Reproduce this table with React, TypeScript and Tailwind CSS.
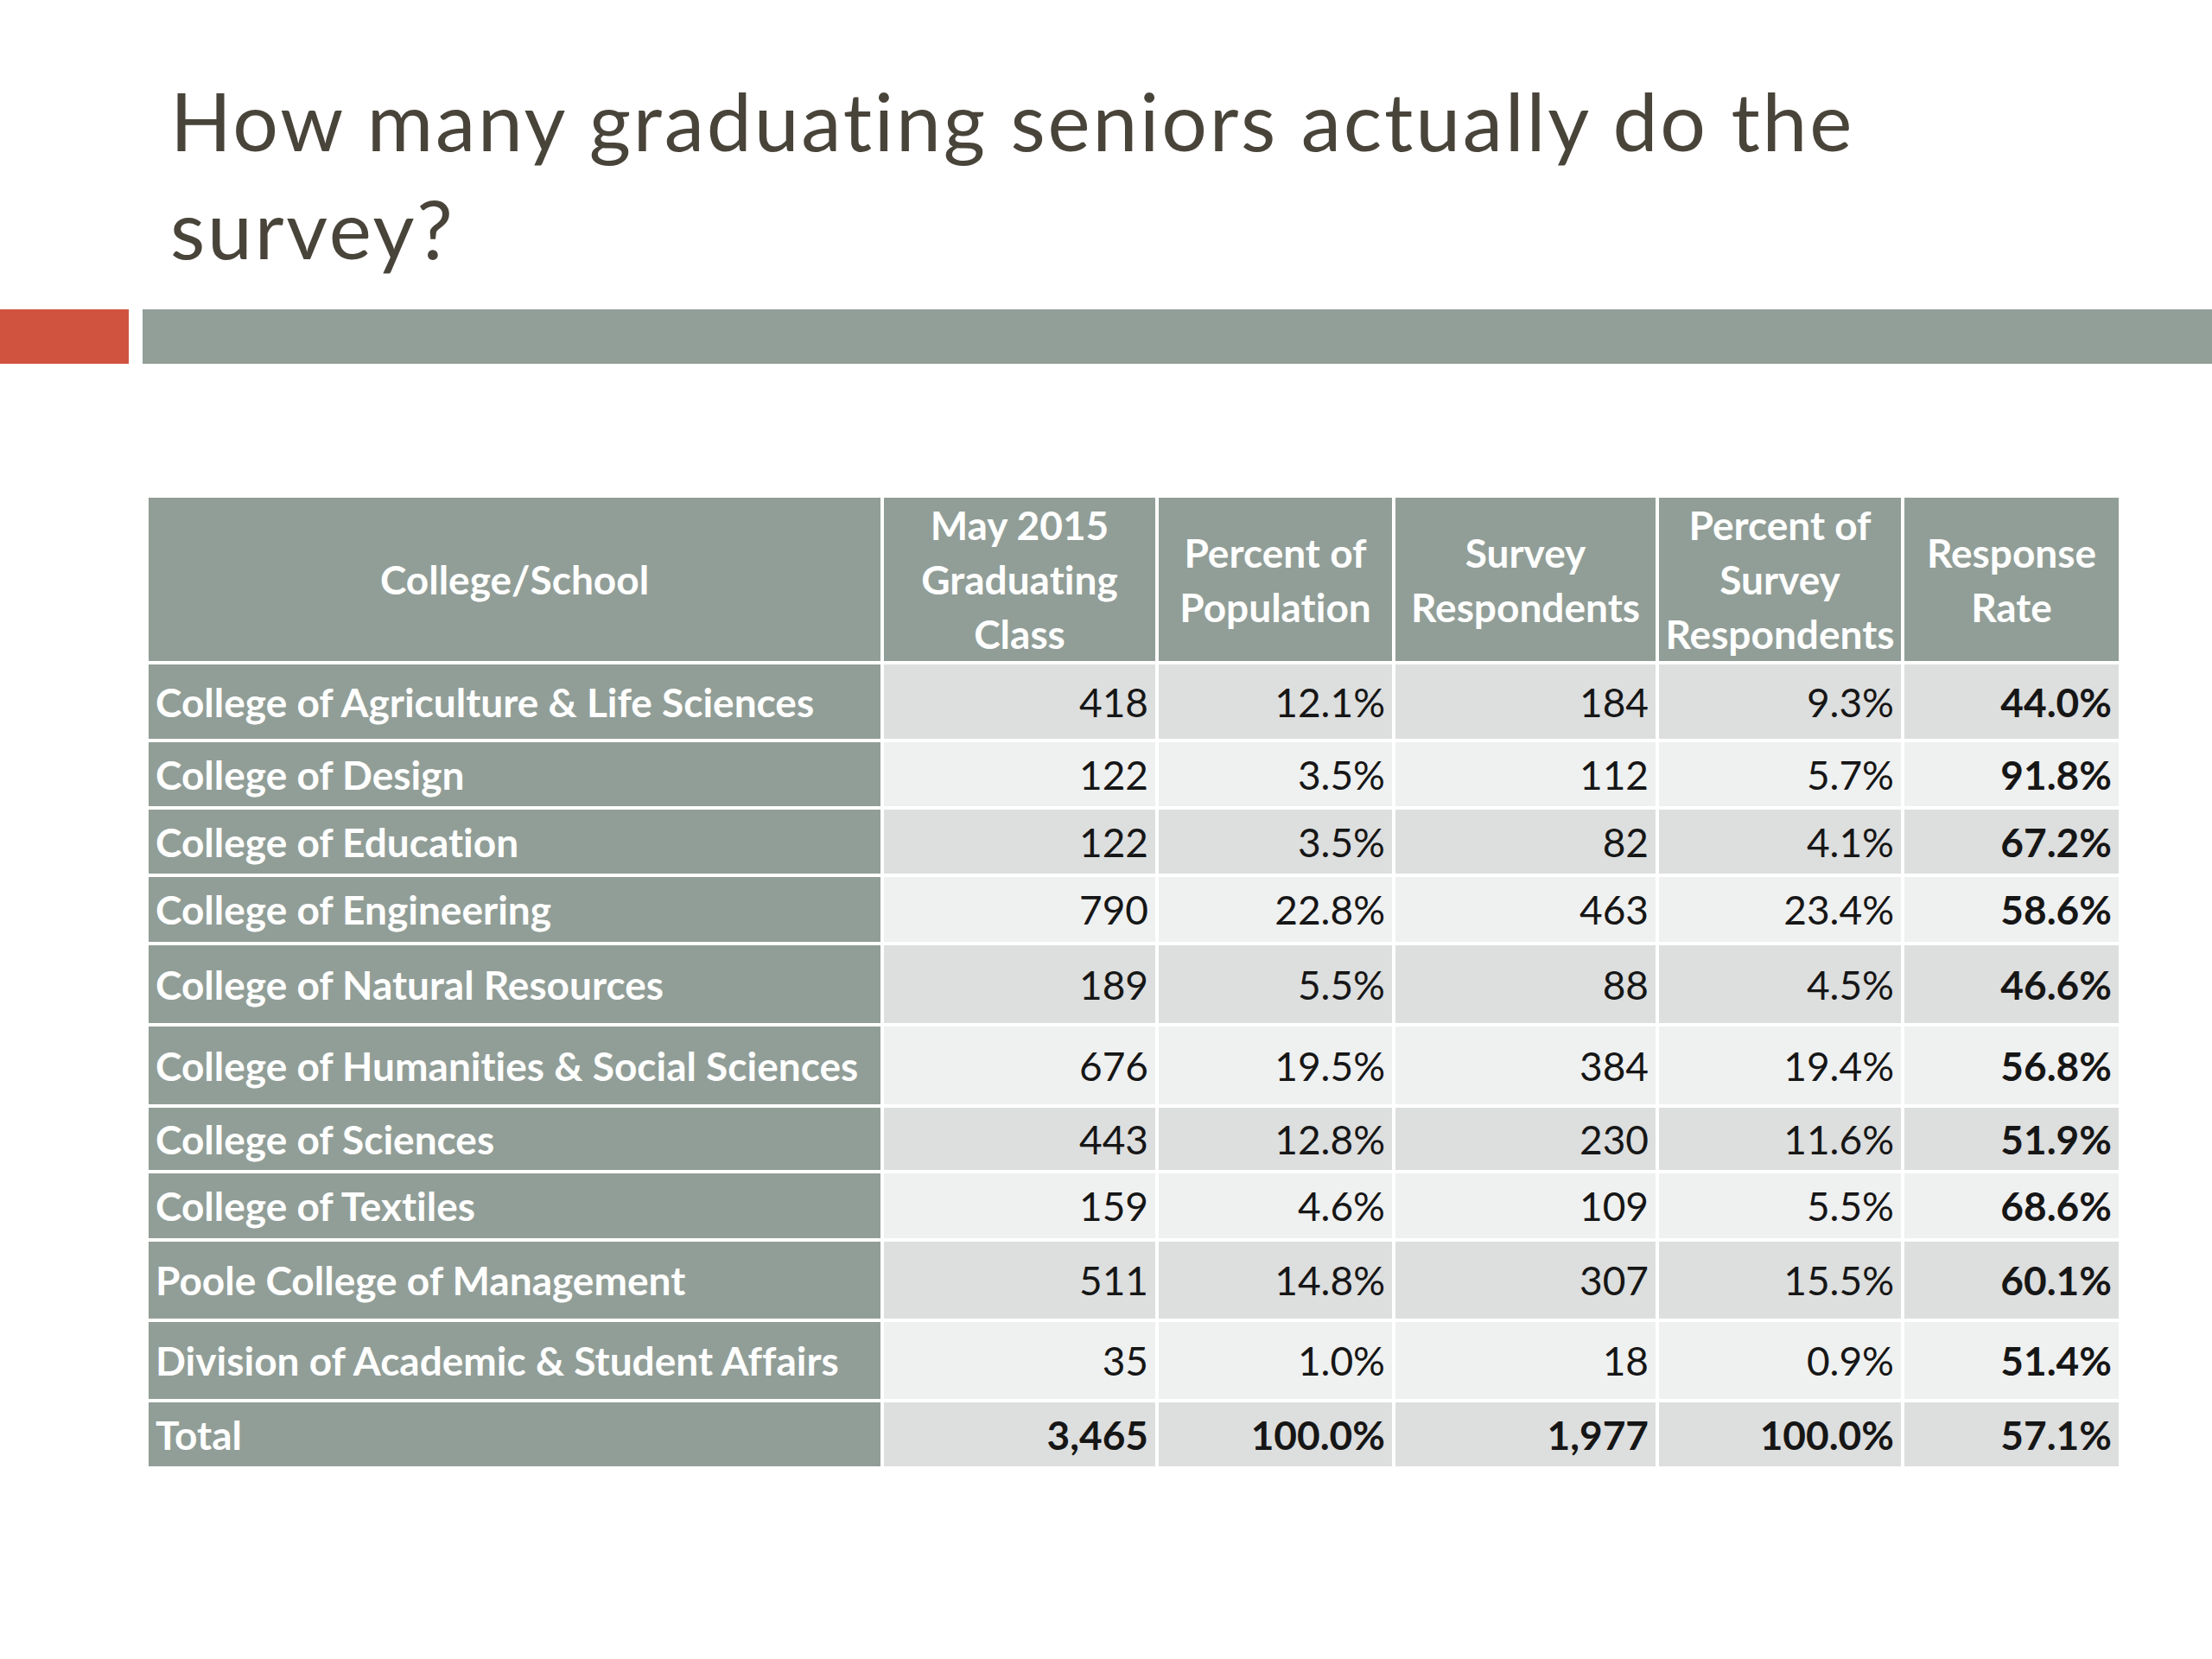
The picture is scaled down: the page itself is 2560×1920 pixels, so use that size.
const rows = [
  { name: "College of Agriculture & Life Sciences", cls: "418", pop: "12.1%", resp: "184", pct: "9.3%", rate: "44.0%", h: "h-[86px]", bg: "bg-[#dddede]" },
  { name: "College of Design", cls: "122", pop: "3.5%", resp: "112", pct: "5.7%", rate: "91.8%", h: "h-[74px]", bg: "bg-[#eff0f0]" },
  { name: "College of Education", cls: "122", pop: "3.5%", resp: "82", pct: "4.1%", rate: "67.2%", h: "h-[74px]", bg: "bg-[#dddede]" },
  { name: "College of Engineering", cls: "790", pop: "22.8%", resp: "463", pct: "23.4%", rate: "58.6%", h: "h-[75px]", bg: "bg-[#eff0f0]" },
  { name: "College of Natural Resources", cls: "189", pop: "5.5%", resp: "88", pct: "4.5%", rate: "46.6%", h: "h-[90px]", bg: "bg-[#dddede]" },
  { name: "College of Humanities & Social Sciences", cls: "676", pop: "19.5%", resp: "384", pct: "19.4%", rate: "56.8%", h: "h-[90px]", bg: "bg-[#eff0f0]" },
  { name: "College of Sciences", cls: "443", pop: "12.8%", resp: "230", pct: "11.6%", rate: "51.9%", h: "h-[72px]", bg: "bg-[#dddede]" },
  { name: "College of Textiles", cls: "159", pop: "4.6%", resp: "109", pct: "5.5%", rate: "68.6%", h: "h-[75px]", bg: "bg-[#eff0f0]" },
  { name: "Poole College of Management", cls: "511", pop: "14.8%", resp: "307", pct: "15.5%", rate: "60.1%", h: "h-[89px]", bg: "bg-[#dddede]" },
  { name: "Division of Academic & Student Affairs", cls: "35", pop: "1.0%", resp: "18", pct: "0.9%", rate: "51.4%", h: "h-[89px]", bg: "bg-[#eff0f0]" },
];

const total = { name: "Total", cls: "3,465", pop: "100.0%", resp: "1,977", pct: "100.0%", rate: "57.1%" };

const grid = "grid grid-cols-[847px_314px_270px_301px_280px_248px] gap-x-[4px]";

function DataCell({ value, bg, bold }: { value: string; bg: string; bold?: boolean }) {
  return (
    <div className={`${bg} flex items-center justify-end pr-[8px] ${bold ? "font-bold" : ""}`}>
      {value}
    </div>
  );
}

export default function App() {
  return (
    <div
      className="w-[2560px] h-[1920px] bg-white overflow-hidden [font-variant-ligatures:none]"
      style={{ fontFamily: "Lato, 'Open Sans', sans-serif" }}
    >
      {/* title */}
      <h1 className="pt-[77px] pl-[197px] text-[93px] leading-[125px] tracking-[2.8px] text-[#49443a] font-normal">
        How many graduating seniors actually do the
        <br />
        survey?
      </h1>

      {/* accent bar */}
      <div className="mt-[31px] flex gap-[16px] h-[63px]">
        <div className="w-[149px] bg-[#cf533f]" />
        <div className="flex-1 bg-[#929f98]" />
      </div>

      {/* table */}
      <div className="mt-[155px] ml-[172px] w-[2280px] text-[46px] text-[#161616]">
        <div className={`${grid} h-[182px] text-white font-bold leading-[63px] text-center`}>
          <div className="bg-[#919e97] flex items-center justify-center">College/School</div>
          <div className="bg-[#919e97] flex items-center justify-center">May 2015<br />Graduating<br />Class</div>
          <div className="bg-[#919e97] flex items-center justify-center">Percent of<br />Population</div>
          <div className="bg-[#919e97] flex items-center justify-center">Survey<br />Respondents</div>
          <div className="bg-[#919e97] flex items-center justify-center">Percent of<br />Survey<br />Respondents</div>
          <div className="bg-[#919e97] flex items-center justify-center">Response<br />Rate</div>
        </div>

        <div className="mt-[11px] flex flex-col gap-y-[4px]">
          {rows.map((r) => (
            <div key={r.name} className={`${grid} ${r.h}`}>
              <div className="bg-[#919e97] text-white font-bold flex items-center pl-[8px] whitespace-nowrap">{r.name}</div>
              <DataCell value={r.cls} bg={r.bg} />
              <DataCell value={r.pop} bg={r.bg} />
              <DataCell value={r.resp} bg={r.bg} />
              <DataCell value={r.pct} bg={r.bg} />
              <DataCell value={r.rate} bg={r.bg} bold />
            </div>
          ))}
          <div className={`${grid} h-[74px] font-bold`}>
            <div className="bg-[#919e97] text-white flex items-center pl-[8px]">{total.name}</div>
            <DataCell value={total.cls} bg="bg-[#dddede]" />
            <DataCell value={total.pop} bg="bg-[#dddede]" />
            <DataCell value={total.resp} bg="bg-[#dddede]" />
            <DataCell value={total.pct} bg="bg-[#dddede]" />
            <DataCell value={total.rate} bg="bg-[#dddede]" />
          </div>
        </div>
      </div>
    </div>
  );
}
